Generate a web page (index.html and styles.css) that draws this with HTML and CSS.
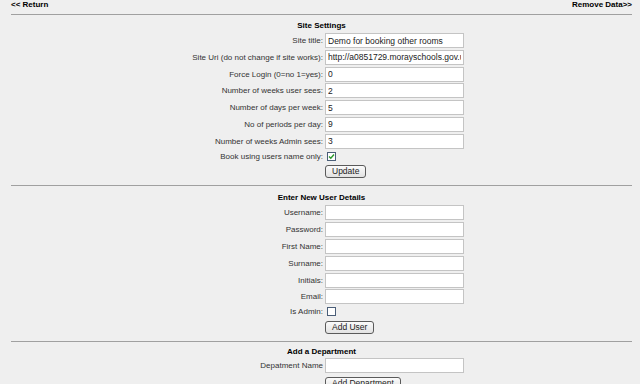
FILE: index.html
```html
<!DOCTYPE html>
<html lang="en">

<head>
    <meta charset="UTF-8">
    <meta name="viewport" content="width=device-width, initial-scale=1.0">
    <title>Admin Settings</title>
    <link rel="stylesheet" href="styles.css">
</head>

<body>
    <div class="page">
        <div class="topbar">
            <a href="#">&lt;&lt; Return</a>
            <a href="#">Remove Data&gt;&gt;</a>
        </div>

        <div class="section">
            <h2>Site Settings</h2>
            <form class="fields">
                <label>Site title:</label>
                <input type="text" value="Demo for booking other rooms">
                <label>Site Uri (do not change if site works):</label>
                <input type="text" value="http://a0851729.morayschools.gov.uk/rooms/">
                <label>Force Login (0=no 1=yes):</label>
                <input type="text" value="0">
                <label>Number of weeks user sees:</label>
                <input type="text" value="2">
                <label>Number of days per week:</label>
                <input type="text" value="5">
                <label>No of periods per day:</label>
                <input type="text" value="9">
                <label>Number of weeks Admin sees:</label>
                <input type="text" value="3">
                <label>Book using users name only:</label>
                <div class="tick"><span class="check"><svg width="7" height="7" viewBox="0 0 7 7"><polyline points="1,3.5 2.8,5.3 6,1.5" fill="none" stroke="#2a9a2a" stroke-width="1.4"/></svg></span></div>
                <span></span>
                <div class="action"><button type="button">Update</button></div>
            </form>
        </div>

        <div class="section users">
            <h2>Enter New User Details</h2>
            <form class="fields">
                <label>Username:</label>
                <input type="text">
                <label>Password:</label>
                <input type="password">
                <label>First Name:</label>
                <input type="text">
                <label>Surname:</label>
                <input type="text">
                <label>Initials:</label>
                <input type="text">
                <label>Email:</label>
                <input type="text">
                <label>Is Admin:</label>
                <div class="tick"><span class="check"></span></div>
                <span></span>
                <div class="action"><button type="button">Add User</button></div>
            </form>
        </div>

        <div class="section dept">
            <h2>Add a Department</h2>
            <form class="fields">
                <label>Depatment Name</label>
                <input type="text">
                <span></span>
                <div class="action"><button type="button">Add Department</button></div>
            </form>
        </div>
    </div>
</body>

</html>
```

FILE: styles.css
```css
html,
body {
    overflow: hidden;
}

body {
    margin: 0;
    background-color: #efefef;
    font-family: 'Liberation Sans', Arial, sans-serif;
    font-size: 8px;
    color: #333;
}

.page {
    padding: 0 8px 0 11px;
}

.topbar {
    display: flex;
    justify-content: space-between;
    height: 9px;
    line-height: 9px;
    font-weight: bold;
}

.topbar a {
    color: #000;
    text-decoration: none;
}

.section {
    border-top: 1px solid #a0a0a0;
    margin-top: 5px;
}

.section h2 {
    margin: 6px 0 2px;
    font-size: 8px;
    line-height: 10px;
    text-align: center;
    color: #000;
}

.users h2 {
    margin-top: 7px;
}

.dept h2 {
    margin: 5px 0 1px;
}

.fields {
    display: grid;
    grid-template-columns: 312px 140px;
    column-gap: 2px;
    row-gap: 1.8px;
    align-items: center;
    margin: 0;
}

.fields label {
    text-align: right;
    white-space: nowrap;
}

.fields input {
    box-sizing: border-box;
    width: 139px;
    height: 15px;
    margin: 0;
    padding: 0 2px;
    border: 1px solid #c4c4c4;
    background-color: #fff;
    font-family: 'Liberation Sans', Arial, sans-serif;
    font-size: 8.5px;
    color: #222;
}

.tick {
    height: 11px;
    display: flex;
    align-items: center;
    padding-left: 2px;
}

.check {
    box-sizing: border-box;
    width: 9px;
    height: 9px;
    border: 1px solid #4a5e78;
    background-color: #fff;
    display: flex;
    align-items: center;
    justify-content: center;
}

.action {
    height: 17px;
    display: flex;
    align-items: center;
}

button {
    height: 13px;
    padding: 0 6px;
    border: 1px solid #5a5a5a;
    border-radius: 3px;
    background: linear-gradient(#fbfbfb, #e2e2e2);
    font-family: 'Liberation Sans', Arial, sans-serif;
    font-size: 8.5px;
    line-height: 11px;
    color: #222;
    cursor: pointer;
}
```
